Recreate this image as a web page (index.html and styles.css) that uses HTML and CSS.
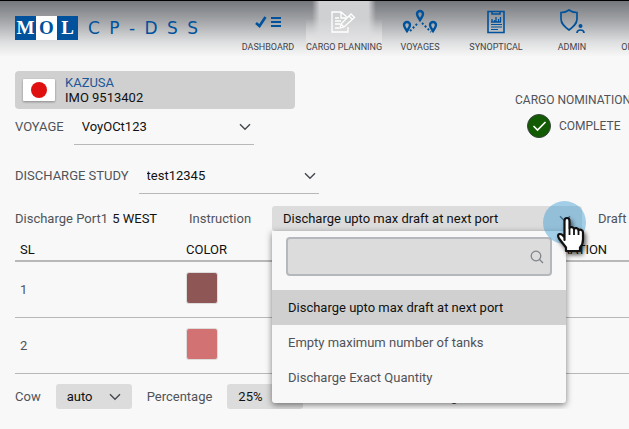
FILE: index.html
```html
<!DOCTYPE html>
<html lang="en">
<head>
<meta charset="utf-8">
<meta name="viewport" content="width=device-width, initial-scale=1">
<title>CP-DSS</title>
<link rel="stylesheet" href="styles.css">
</head>
<body>
<svg class="defs" aria-hidden="true">
  <symbol id="chevron" viewBox="0 0 12 8"><path d="M1 1.2 6 6.3l5-5.1" fill="none" stroke="currentColor" stroke-width="1.4"/></symbol>
</svg>
<header class="topbar">
  <div class="brand">
    <div class="logo"><span>M</span><span class="logo-mid">O</span><span>L</span></div>
    <div class="wordmark"><span>C</span><span>P</span><span>-</span><span>D</span><span>S</span><span>S</span></div>
  </div>
  <nav class="nav">
    <a href="#" class="nav-item">
      <svg width="28" height="28" viewBox="0 0 28 28" fill="none" stroke="currentColor"><path d="m2 15 3.500 3 6-9" stroke-width="2.600"/><path d="M17 10h10M17 14h10M17 18h10" stroke-width="2"/></svg>
      <span>DASHBOARD</span>
    </a>
    <a href="#" class="nav-item active" aria-current="page">
      <svg width="28" height="28" viewBox="0 0 28 28" fill="none" stroke="currentColor" stroke-width="1.300"><path d="M18 19v5H2V4h9l6 5M11 4v6h5M5 10h4M5 13h6M5 16h5M5 20h4"/><path d="m11 16 10-10 3.500 3.500L14 19l-4 1zM19 8l3.500 3.500M11 16l3 3"/></svg>
      <span>CARGO PLANNING</span>
    </a>
    <a href="#" class="nav-item">
      <svg width="36" height="28" viewBox="0 0 36 28" fill="none" stroke="currentColor"><g stroke-width="2.400"><path d="M5 23c-2-3-3-4-3-6a3 3 0 0 1 6 0c0 2-1 3-3 6zM18 12c-2-3-3-4-3-6a3 3 0 0 1 6 0c0 2-1 3-3 6zM31 23c-2-3-3-4-3-6a3 3 0 0 1 6 0c0 2-1 3-3 6z"/></g><path d="m8 23 8-8M20 15l9 9" stroke-width="2" stroke-dasharray="2 2"/></svg>
      <span>VOYAGES</span>
    </a>
    <a href="#" class="nav-item">
      <svg width="28" height="28" viewBox="0 0 28 28" fill="none" stroke="currentColor"><path d="M6 3.500h16v21H6z" stroke-width="1.600"/><path d="M10 3v3h8V3" stroke-width="1.500"/><path d="M9 14h10M10 14v-3M12.500 14v-2M14 14V9M16.500 14v-3M18.500 14v-5" stroke-width="1.300"/><path d="M9 16.500h11M9 19h11M9 21.500h7" stroke-width="1.200"/></svg>
      <span>SYNOPTICAL</span>
    </a>
    <a href="#" class="nav-item">
      <svg width="28" height="28" viewBox="0 0 28 28" fill="none" stroke="currentColor" stroke-width="1.700"><path d="M11 2c2 1.500 5 2.500 8 2.500V11c0 5-4 8-8 11-4-3-8-6-8-11V4.500C6 4.500 9 3.500 11 2z"/><circle cx="22.500" cy="18" r="2" fill="currentColor" stroke="none"/><path d="M19 25c0-4 7-4 7 0"/></svg>
      <span>ADMIN</span>
    </a>
    <a href="#" class="nav-item">
      <svg width="28" height="28" viewBox="0 0 28 28"></svg>
      <span>OPERATIONS</span>
    </a>
  </nav>
</header>

<main class="page">
  <section class="summary">
    <div class="voyage-info">
      <div class="vessel">
        <svg class="flag" width="32" height="22" viewBox="0 0 32 22" role="img" aria-label="Japan"><rect width="32" height="22" rx="1" fill="#fff"/><circle cx="16" cy="11" r="8" fill="#df1010"/></svg>
        <div><div class="vessel-name">KAZUSA</div><div>IMO 9513402</div></div>
      </div>
      <div class="line-field">
        <label for="voyage">VOYAGE</label>
        <div class="select line"><select id="voyage"><option>VoyOCt123</option></select><svg><use href="#chevron"/></svg></div>
      </div>
    </div>
    <div class="status">
      <div>CARGO NOMINATION</div>
      <div class="status-value">
        <svg width="24" height="24" viewBox="0 0 24 24"><circle cx="12" cy="12" r="11.500" fill="#125a03" stroke="#39453c"/><path d="m6.500 12 4 4 8-8" fill="none" stroke="#fff" stroke-width="1.600"/></svg>
        <span>COMPLETE</span>
      </div>
    </div>
  </section>
  <div class="line-field study">
    <label for="study">DISCHARGE STUDY</label>
    <div class="select line"><select id="study"><option>test12345</option></select><svg><use href="#chevron"/></svg></div>
  </div>

  <section class="port-bar">
    <div class="port">Discharge Port1 <span class="strong">5 WEST</span></div>
    <label class="instruction-label" for="instruction">Instruction</label>
    <div class="instruction">
      <div class="select filled"><select id="instruction"><option>Discharge upto max draft at next port</option></select><svg><use href="#chevron"/></svg></div>
      <div class="menu">
        <div class="search">
          <input type="search" aria-label="Search instructions">
          <svg width="14" height="14" viewBox="0 0 14 14" fill="none" stroke="currentColor" stroke-width="1.200"><circle cx="6" cy="6" r="4.800"/><path d="m9.500 9.500 3.500 3.500"/></svg>
        </div>
        <button type="button" class="option selected">Discharge upto max draft at next port</button>
        <button type="button" class="option">Empty maximum number of tanks</button>
        <button type="button" class="option">Discharge Exact Quantity</button>
      </div>
      <div class="pointer" aria-hidden="true">
        <svg width="32" height="42" viewBox="0 0 32 42"><path d="M8.500 24V5c0-4 5-4 5 0v7c1-1.500 4-1 4.500 1 1-1.500 4-1 4.500 1 2-1 4.500 0 4.500 2.500v7c0 4-1 6-3 8v3.500H10v-3.500l-7-9c-3-5 2-6.500 5.500-1z" fill="#fff" stroke="#111" stroke-width="2.200" stroke-linejoin="round"/><path d="M13.500 12v7M18 13v6M22.500 14v5" stroke="#111" stroke-width="1.800"/></svg>
      </div>
    </div>
    <div class="draft">Draft</div>
  </section>

  <table class="cargo">
    <thead><tr><th class="col-sl">SL</th><th class="col-color">COLOR</th><th>DURATION</th></tr></thead>
    <tbody>
      <tr><td>1</td><td><div class="swatch brown"></div></td><td></td></tr>
      <tr><td>2</td><td><div class="swatch coral"></div></td><td></td></tr>
    </tbody>
  </table>

  <section class="cow-bar">
    <label for="cow">Cow</label>
    <div class="select filled small"><select id="cow"><option>auto</option></select><svg><use href="#chevron"/></svg></div>
    <label for="percentage">Percentage</label>
    <div class="select filled small"><select id="percentage"><option>25%</option></select><svg><use href="#chevron"/></svg></div>
    <div class="washing">Tank washing</div>
  </section>
</main>
</body>
</html>
```
FILE: styles.css
```css
* { box-sizing: border-box; }

body {
  margin: 0;
  background: #f8f8f8;
  color: #505358;
  font: 13px/16px Roboto, "Liberation Sans", sans-serif;
  overflow: hidden;
}

.defs { position: absolute; width: 0; height: 0; }

.topbar {
  display: flex;
  height: 60px;
  padding-left: 15px;
  border-top: 1px solid #000;
  background: linear-gradient(#74777c, #a5a7aa 35%, #dedfe0 70%, #f8f8f8 95%);
}

.brand {
  display: flex;
  flex: none;
  gap: 10px;
  width: 215px;
  padding-top: 15px;
  color: #00529c;
}

.logo { display: flex; height: 24px; background: #00529c; color: #fff; }
.logo span {
  width: 21px;
  text-align: center;
  font: bold 19px/24px "Liberation Serif", serif;
}
.logo .logo-mid { background: #fff; color: #00529c; }

.wordmark {
  display: flex;
  justify-content: space-between;
  width: 110px;
  font: 17px/24px "DejaVu Sans", sans-serif;
}

.nav { display: flex; flex: 1; min-width: 0; overflow: hidden; }
.nav-item {
  display: flex;
  flex: none;
  flex-direction: column;
  align-items: center;
  gap: 5px;
  width: 76px;
  padding-top: 7px;
  color: #00529c;
  font-size: 9px;
  line-height: 12px;
  text-decoration: none;
  white-space: nowrap;
}
.nav-item span { color: #3f4349; }
.nav-item.active {
  color: #fff;
  background:
    linear-gradient(transparent 30%, #e6e6e7 75%, #f8f8f8 95%),
    linear-gradient(90deg, transparent 8%, #cfd0d2 18%, #cfd0d2 82%, transparent 92%);
}

.page { padding: 11px 0 0 15px; }

.summary { display: flex; justify-content: space-between; }

.vessel {
  display: flex;
  align-items: center;
  gap: 10px;
  width: 280px;
  height: 38px;
  padding-left: 8px;
  border-radius: 4px;
  background: #d0d0d0;
  color: #111;
  line-height: 15px;
}
.vessel-name { color: #1c5796; }
.flag { filter: drop-shadow(0 1px 1px #888); }

.line-field { display: flex; align-items: center; height: 36px; gap: 10px; }
.line-field.study { margin-top: 13px; }

.select { display: grid; align-items: center; }
.select > * { grid-area: 1 / 1; }
.select > svg {
  justify-self: end;
  width: 12px;
  height: 8px;
  margin-right: 3px;
  color: #45494f;
  pointer-events: none;
}
select {
  width: 100%;
  height: 100%;
  padding: 0;
  border: 0;
  appearance: none;
  background: none;
  color: #111;
  font: inherit;
}
.select.line {
  width: 180px;
  height: 36px;
  padding-left: 8px;
  border-bottom: 1px solid #b8b8b8;
}
.select.filled {
  height: 25px;
  padding: 0 8px 0 11px;
  border-radius: 3px;
  background: #dcdcdc;
}

.status {
  width: 114px;
  padding-top: 22px;
  font-size: 12px;
  line-height: 15px;
  white-space: nowrap;
}
.status-value {
  display: flex;
  align-items: center;
  gap: 8px;
  margin-top: 6px;
  padding-left: 12px;
}

.port-bar { display: flex; align-items: center; margin-top: 12px; }
.port-bar > * { flex: none; }
.port { width: 174px; }
.strong { margin-left: 1px; color: #111; }
.instruction-label { width: 83px; }
.instruction { position: relative; width: 310px; }
.draft { margin-left: 16px; }

.menu {
  position: absolute;
  z-index: 2;
  top: 100%;
  left: 0;
  width: 294px;
  padding: 6px 0 8px;
  border-radius: 0 0 3px 3px;
  background: #f8f8f8;
  box-shadow: 0 2px 6px rgba(0, 0, 0, .5);
}
.search { display: grid; align-items: center; margin: 0 14px 14px; }
.search > * { grid-area: 1 / 1; }
.search input {
  width: 100%;
  height: 39px;
  padding: 0 32px 0 8px;
  border: 2px solid #b4b7bb;
  border-radius: 4px;
  appearance: none;
  background: #dcdcdc;
  font: inherit;
}
.search svg { justify-self: end; margin-right: 8px; color: #7c8087; }
.option {
  display: block;
  width: 100%;
  height: 35px;
  padding: 0 16px;
  border: 0;
  background: none;
  color: #505358;
  font: inherit;
  text-align: left;
}
.option.selected { background: #d0d0d0; color: #111; }

.pointer {
  position: absolute;
  z-index: 3;
  top: -5px;
  right: -4px;
  width: 43px;
  height: 43px;
  padding: 15px 0 0 13px;
  border-radius: 50%;
  background: rgba(60, 155, 210, .45);
}
.pointer svg { display: block; filter: drop-shadow(2px 3px 2px rgba(0, 0, 0, .6)); }

.cargo {
  width: 100%;
  border-collapse: separate;
  border-spacing: 0;
  table-layout: fixed;
}
.cargo th {
  height: 31px;
  padding: 9px 5px 0;
  border-bottom: 2px solid #b8b8b8;
  color: #111;
  font-weight: normal;
  text-align: left;
}
.cargo td { height: 56px; padding: 0 5px; border-bottom: 1px solid #b8b8b8; }
.cargo .col-sl { width: 166px; }
.cargo .col-color { width: 359px; }
.swatch {
  width: 32px;
  height: 32px;
  margin-top: -4px;
  border: 1px solid #ddd;
  border-radius: 3px;
}
.brown { background: #8e5655; }
.coral { background: #d27272; }

.cow-bar { display: flex; align-items: center; gap: 15px; padding-top: 10px; }
.select.small { width: 76px; }
.washing { margin-left: 60px; }
```
